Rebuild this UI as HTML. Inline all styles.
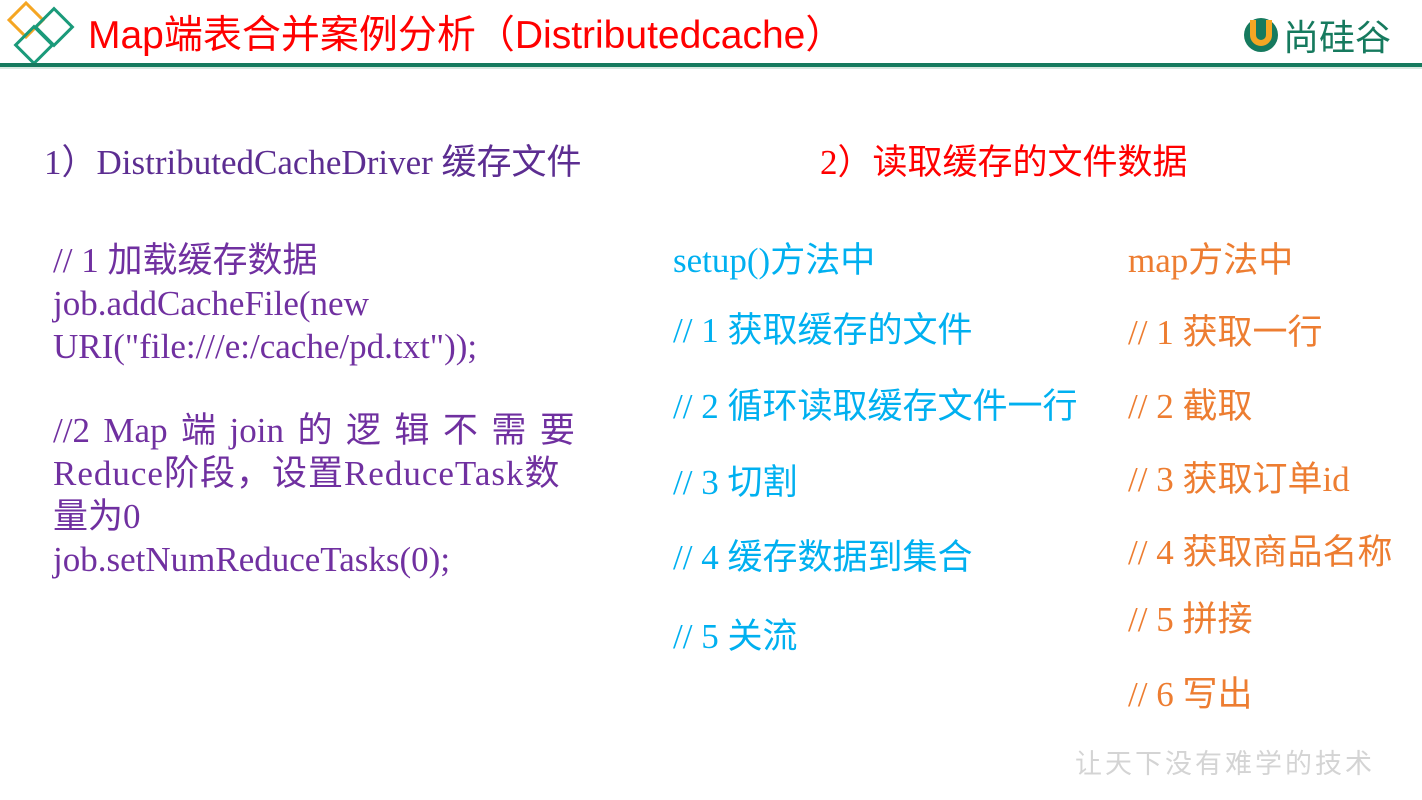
<!DOCTYPE html>
<html><head><meta charset="utf-8"><style>
body{margin:0;width:1422px;height:800px;background:#fff;position:relative;overflow:hidden;font-family:"Liberation Serif","Noto Sans CJK SC",serif}
.t{position:absolute;white-space:nowrap;line-height:1}
.p{color:#7030a0;font-size:35px}
.b{color:#00b0f0;font-size:35px}
.o{color:#ed7d31;font-size:35px}
</style></head><body>
<svg style="position:absolute;left:0;top:0" width="90" height="70">
<rect x="-12" y="-12" width="24" height="24" transform="translate(26 20) rotate(45)" fill="none" stroke="#f5a623" stroke-width="3"/>
<g fill="none" stroke="#1a9a7a" stroke-width="3">
<rect x="-13" y="-13" width="26" height="26" transform="translate(54 27) rotate(45)"/>
<rect x="-13" y="-13" width="26" height="26" transform="translate(34 45) rotate(45)"/>
</g></svg>
<div class="t" style="left:88px;top:16px;font-size:39px;color:#f00;font-family:'Liberation Sans','Noto Sans CJK SC',sans-serif">Map端表合并案例分析（Distributedcache）</div>
<div style="position:absolute;left:0;top:63px;width:1422px;height:4px;background:#167a5e"></div>
<div style="position:absolute;left:0;top:67px;width:1422px;height:2px;background:#d8e8e0"></div>
<svg style="position:absolute;left:1240px;top:14px" width="42" height="42">
<circle cx="21" cy="21" r="17" fill="#167a5e"/>
<path d="M13 6 V21 A8 8 0 0 0 29 21 V6" fill="none" stroke="#f5a623" stroke-width="6"/>
</svg>
<div class="t" style="left:1283px;top:17px;font-size:36px;color:#167a5e;font-family:'Noto Sans CJK SC',sans-serif">尚硅谷</div>
<div class="t" style="left:44px;top:145px;font-size:35px;color:#5c2d91">1）DistributedCacheDriver 缓存文件</div>
<div class="t" style="left:820px;top:145px;font-size:35px;color:#f00">2）读取缓存的文件数据</div>
<div class="t p" style="left:53px;top:243px">// 1 加载缓存数据</div>
<div class="t p" style="left:53px;top:286px">job.addCacheFile(new</div>
<div class="t p" style="left:53px;top:329px">URI("file:///e:/cache/pd.txt"));</div>
<div class="t p" style="left:53px;top:413px;width:522px;display:flex;justify-content:space-between"><span>//2</span><span>Map</span><span>端</span><span>join</span><span>的</span><span>逻</span><span>辑</span><span>不</span><span>需</span><span>要</span></div>
<div class="t p" style="left:53px;top:456px;letter-spacing:1px">Reduce阶段，设置ReduceTask数</div>
<div class="t p" style="left:53px;top:499px">量为0</div>
<div class="t p" style="left:53px;top:542px">job.setNumReduceTasks(0);</div>
<div class="t b" style="left:673px;top:243px">setup()方法中</div>
<div class="t b" style="left:673px;top:313px">// 1 获取缓存的文件</div>
<div class="t b" style="left:673px;top:389px">// 2 循环读取缓存文件一行</div>
<div class="t b" style="left:673px;top:465px">// 3 切割</div>
<div class="t b" style="left:673px;top:540px">// 4 缓存数据到集合</div>
<div class="t b" style="left:673px;top:619px">// 5 关流</div>
<div class="t o" style="left:1128px;top:243px">map方法中</div>
<div class="t o" style="left:1128px;top:315px">// 1 获取一行</div>
<div class="t o" style="left:1128px;top:389px">// 2 截取</div>
<div class="t o" style="left:1128px;top:462px">// 3 获取订单id</div>
<div class="t o" style="left:1128px;top:535px">// 4 获取商品名称</div>
<div class="t o" style="left:1128px;top:602px">// 5 拼接</div>
<div class="t o" style="left:1128px;top:677px">// 6 写出</div>
<div class="t" style="left:1075px;top:748px;font-size:27px;color:#d4d4d4;letter-spacing:3px;font-family:'Noto Sans CJK SC',sans-serif">让天下没有难学的技术</div>
</body></html>
